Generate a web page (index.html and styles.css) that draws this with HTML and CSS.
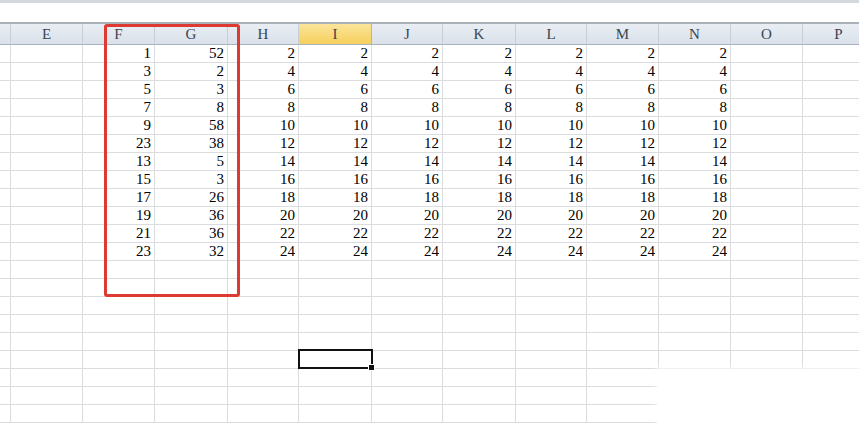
FILE: index.html
```
<!DOCTYPE html>
<html>
    <head>
        <title>Sheet1</title>
        <meta charset="UTF-8">
        <link rel="stylesheet" href="styles.css">
    </head>
    <body>
        <div class="sheet">
            <div class="topbar"></div>
            <div class="formula"></div>
            <div class="grid" id="grid"></div>
            <!-- marks drawn over the cells -->
            <div class="redbox"></div>
            <div class="selected"><span class="handle"></span></div>
            <div class="blank"></div>
        </div>
        <script type="text/javascript" src="grid.js"></script>
    </body>
</html>
```

FILE: styles.css
```
body {
    margin: 0;
    overflow: hidden;
    background-color: #fff;
}
.sheet {
    position: relative;
    width: 859px;
    height: 423px;
    overflow: hidden;
}
.topbar {
    height: 3px;
    background-color: #d3d8de;
}
.formula {
    height: 19px;
    background-color: #fff;
    border-bottom: 2px solid #a9b0b8;
}
.grid {
    display: grid;
    grid-template-columns: 11px 72px 72px 73px 71px 73px 71px 73px 71px 72px 72px 72px 72px;
    grid-template-rows: 21px;
    grid-auto-rows: 18px;
    width: 875px;
}
.cell {
    box-sizing: border-box;
    border-right: 1px solid #dadcdf;
    border-bottom: 1px solid #dadcdf;
    font-family: "Liberation Serif", serif;
    font-size: 15px;
    line-height: 17px;
    color: #000;
    text-align: right;
    padding-right: 3px;
}
.head {
    box-sizing: border-box;
    background: linear-gradient(#e9eef4, #dae1ea);
    border-right: 1px solid #c6ced8;
    border-bottom: 1px solid #a8b2bf;
    font-family: "Liberation Serif", serif;
    font-size: 15px;
    line-height: 20px;
    color: #3a4452;
    text-align: center;
}
.head.active {
    background: linear-gradient(#fbe59a, #f6cf5c);
    border-right-color: #e2b34a;
}
.redbox {
    position: absolute;
    left: 104px;
    top: 24px;
    width: 130px;
    height: 267px;
    border: 3px solid #dc3a33;
    border-radius: 3px;
}
.selected {
    position: absolute;
    left: 298px;
    top: 349px;
    width: 71px;
    height: 16px;
    border: 2px solid #111;
}
.handle {
    position: absolute;
    right: -4px;
    bottom: -4px;
    width: 5px;
    height: 5px;
    background-color: #111;
    border: 1px solid #fff;
}
.blank {
    position: absolute;
    left: 658px;
    top: 370px;
    width: 220px;
    height: 70px;
    background-color: #fff;
    box-shadow: 0 0 5px 2px #fff;
}
```

FILE: grid.js
```
var cols = ["", "E", "F", "G", "H", "I", "J", "K", "L", "M", "N", "O", "P"];
var colF = [1, 3, 5, 7, 9, 23, 13, 15, 17, 19, 21, 23];
var colG = [52, 2, 3, 8, 58, 38, 5, 3, 26, 36, 36, 32];
var grid = document.getElementById("grid");

// header row
for (var c = 0; c < cols.length; c++) {
    var h = document.createElement("div");
    h.className = "head" + (cols[c] == "I" ? " active" : "");
    h.textContent = cols[c];
    grid.appendChild(h);
}

// data rows
for (var r = 0; r < 22; r++) {
    for (var c = 0; c < cols.length; c++) {
        var d = document.createElement("div");
        d.className = "cell";
        if (r < 12) {
            if (cols[c] == "F") d.textContent = colF[r];
            else if (cols[c] == "G") d.textContent = colG[r];
            else if (c >= 4 && c <= 10) d.textContent = (r + 1) * 2;
        }
        grid.appendChild(d);
    }
}
```
